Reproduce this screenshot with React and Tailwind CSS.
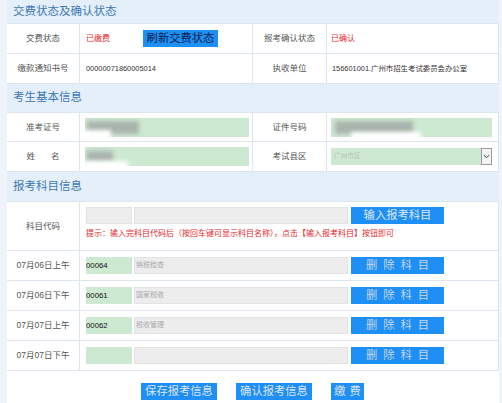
import React from 'react';

const cell = 'border-b border-r border-[#dde5ee] flex items-center';

function SectionTitle({ children, h }) {
    return (
        <div className={`${h} bg-[#e5eff9] border-b border-[#dde5ee] pl-[6px] flex items-center text-[11.5px] text-[#3c79b6]`}>
            {children}
        </div>
    );
}

function Label({ children, className = '' }) {
    return (
        <div className={`${cell} justify-center text-[8.5px] text-[#555] ${className}`}>{children}</div>
    );
}

function BlueButton({ children, className = '' }) {
    return (
        <button className={`h-[17px] bg-[#1e8ff5] flex items-center justify-center whitespace-nowrap text-[11.3px] leading-none ${className}`}>
            {children}
        </button>
    );
}

function Blur({ className }) {
    return <div className={`absolute bg-[#a9b4ad] blur-[2px] ${className}`}></div>;
}

const rows = [
    { date: '07月06日上午', code: '00064', name: '纳税检查' },
    { date: '07月06日下午', code: '00061', name: '国家税收' },
    { date: '07月07日上午', code: '00062', name: '税收管理' },
    { date: '07月07日下午', code: '', name: '' },
];

export default function App() {
    return (
        <div className="min-h-screen bg-[#eef4fa] pl-[7px] pr-[3px] font-['Liberation_Sans','Noto_Sans_CJK_SC',sans-serif]">
            <div className="bg-white">
                {/* 交费状态 */}
                <SectionTitle h="h-[24px]">交费状态及确认状态</SectionTitle>
                <div className="grid grid-cols-[73px_173px_74px_1fr]">
                    <Label className="h-[30px]">交费状态</Label>
                    <div className={`${cell} pl-[6px]`}>
                        <span className="text-[8px] text-[#e3262b]">已缴费</span>
                        <BlueButton className="ml-[33px] w-[75px] text-[#0b1d4a]">刷新交费状态</BlueButton>
                    </div>
                    <Label>报考确认状态</Label>
                    <div className={`${cell} pl-[4px] text-[8px] text-[#e3262b]`}>已确认</div>

                    <Label className="h-[30px]">缴款通知书号</Label>
                    <div className={`${cell} pl-[6px] text-[7.4px] text-[#333]`}>00000071860005014</div>
                    <Label>执收单位</Label>
                    <div className={`${cell} pl-[5px] text-[7.4px] text-[#333]`}>156601001.广州市招生考试委员会办公室</div>
                </div>

                {/* 考生基本信息 */}
                <SectionTitle h="h-[29px]">考生基本信息</SectionTitle>
                <div className="grid grid-cols-[73px_173px_74px_1fr]">
                    <Label className="h-[29px]">准考证号</Label>
                    <div className={`${cell} pl-[5px] pr-[3px]`}>
                        <div className="relative w-full h-[19px] bg-[#cde9d1] overflow-hidden">
                            <Blur className="left-[2px] top-[3px] w-[52px] h-[13px]" />
                            <div className="absolute left-[-4px] top-[12px] w-[30px] h-[10px] bg-white blur-[2px]"></div>
                        </div>
                    </div>
                    <Label>证件号码</Label>
                    <div className={`${cell} pl-[4px] pr-[6px]`}>
                        <div className="relative w-full h-[19px] bg-[#cde9d1] overflow-hidden">
                            <Blur className="left-[4px] top-[3px] w-[78px] h-[13px]" />
                            <div className="absolute left-[20px] top-[14px] w-[70px] h-[8px] bg-white blur-[2px]"></div>
                        </div>
                    </div>

                    <Label className="h-[30px]">
                        <span className="tracking-[16px] pl-[16px]">姓名</span>
                    </Label>
                    <div className={`${cell} pl-[5px] pr-[3px]`}>
                        <div className="relative w-full h-[19px] bg-[#cde9d1] overflow-hidden">
                            <Blur className="left-[2px] top-[4px] w-[26px] h-[11px]" />
                            <div className="absolute left-[-2px] top-[14px] w-[45px] h-[8px] bg-white blur-[2px]"></div>
                        </div>
                    </div>
                    <Label>考试县区</Label>
                    <div className={`${cell} pl-[4px] pr-[6px]`}>
                        <div className="w-full h-[17px] bg-[#cde9d1] flex items-center justify-between">
                            <span className="pl-[3px] text-[6.7px] text-[#b6c4bb]">广州市区</span>
                            <span className="w-[11px] h-[17px] bg-[#f4f4f4] border border-[#9a9a9a] flex items-center justify-center">
                                <svg width="7" height="5" viewBox="0 0 7 5">
                                    <path d="M0.8 1 L3.5 3.8 L6.2 1" fill="none" stroke="#444" strokeWidth="1" />
                                </svg>
                            </span>
                        </div>
                    </div>
                </div>

                {/* 报考科目信息 */}
                <SectionTitle h="h-[30px]">报考科目信息</SectionTitle>
                <div className="grid grid-cols-[73px_1fr]">
                    <Label className="h-[49px]">科目代码</Label>
                    <div className={`${cell} flex-col !items-start justify-start pl-[6px] pt-[5px]`}>
                        <div className="flex items-center gap-[2px]">
                            <div className="w-[46px] h-[17px] bg-[#ededed] border border-[#e3e3e3]"></div>
                            <div className="w-[214px] h-[17px] bg-[#ededed] border border-[#e3e3e3]"></div>
                            <BlueButton className="ml-[1px] w-[93px] text-[#dfe6f1]">输入报考科目</BlueButton>
                        </div>
                        <div className="mt-[6px] text-[8px] text-[#e3262b] leading-none whitespace-nowrap">
                            提示：输入完科目代码后（按回车键可显示科目名称），点击【输入报考科目】按钮即可
                        </div>
                    </div>

                    {rows.map((r) => (
                        <React.Fragment key={r.date}>
                            <Label className="h-[30px] text-[7.9px] text-[#444]">{r.date}</Label>
                            <div className={`${cell} pl-[6px] gap-[2px]`}>
                                <div className="w-[46px] h-[17px] bg-[#cde9d1] flex items-center text-[7.8px] text-[#111] font-medium">{r.code}</div>
                                <div className="w-[214px] h-[17px] bg-[#ededed] border border-[#e3e3e3] flex items-center pl-[1px] text-[7px] text-[#a8a8a8]">{r.name}</div>
                                <BlueButton className="ml-[1px] w-[93px] text-[#c9d5e6] tracking-[6px] pl-[6px]">删除科目</BlueButton>
                            </div>
                        </React.Fragment>
                    ))}
                </div>

                {/* 按钮 */}
                <div className="h-[40px] flex items-start pt-[12px] pl-[134px]">
                    <BlueButton className="w-[76px] text-[#dce4f0]">保存报考信息</BlueButton>
                    <BlueButton className="ml-[19px] w-[76px] text-[#dce4f0]">确认报考信息</BlueButton>
                    <BlueButton className="ml-[19px] w-[33px] text-[#dce4f0] tracking-[4px] pl-[4px]">缴费</BlueButton>
                </div>
            </div>
        </div>
    );
}
